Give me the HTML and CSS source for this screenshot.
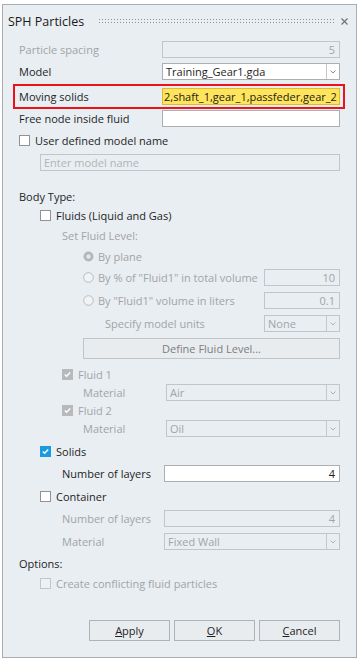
FILE: index.html
```html
<!DOCTYPE html>
<html lang="en">
<head>
  <meta charset="UTF-8" />
  <meta name="viewport" content="width=device-width, initial-scale=1.0"/>
  <title>SPH Particles</title>
  <link rel="stylesheet" href="styles.css">
</head>
<body>
  <div class="dialog">
    <div class="titlebar">
      <span class="title">SPH Particles</span>
      <svg class="grip" width="237" height="6" viewBox="0 0 237 6">
        <defs>
          <pattern id="dots" width="3" height="3" patternUnits="userSpaceOnUse">
            <rect width="1" height="1" fill="#8d9195"/>
          </pattern>
        </defs>
        <rect width="237" height="6" fill="url(#dots)"/>
      </svg>
      <svg class="close" width="7" height="7" viewBox="0 0 7 7">
        <path d="M0.5 0.5 L6.5 6.5 M6.5 0.5 L0.5 6.5" stroke="#6f6f6f" stroke-width="1.1" fill="none"/>
      </svg>
    </div>

    <div class="content">
      <div class="row first">
        <span class="label muted">Particle spacing</span>
        <div class="field off num w-main">5</div>
      </div>

      <div class="row">
        <span class="label">Model</span>
        <div class="field combo w-main">
          <span class="value">Training_Gear1.gda</span>
          <span class="drop"><svg width="6" height="4" viewBox="0 0 6 4"><polyline points="0.5,0.5 3,3 5.5,0.5" fill="none" stroke="#8c8c8c"/></svg></span>
        </div>
      </div>

      <div class="row highlight">
        <span class="label">Moving solids</span>
        <div class="field yellow w-main">
          <span class="value">2,shaft_1,gear_1,passfeder,gear_2</span>
        </div>
      </div>

      <div class="row mt-1">
        <span class="label">Free node inside fluid</span>
        <div class="field w-main"></div>
      </div>

      <div class="row">
        <span class="cb"></span>
        <span class="label">User defined model name</span>
      </div>

      <div class="row">
        <div class="field off w-full placeholder">Enter model name</div>
      </div>

      <div class="row section">
        <span class="label">Body Type:</span>
      </div>

      <div class="row mt-2 ind-1">
        <span class="cb"></span>
        <span class="label">Fluids (Liquid and Gas)</span>
      </div>

      <div class="row mt-3 ind-2">
        <span class="label muted">Set Fluid Level:</span>
      </div>

      <div class="row mt-4 ind-3">
        <svg class="radio" width="11" height="11" viewBox="0 0 11 11">
          <circle cx="5.5" cy="5.5" r="5" fill="#b4b6b8"/>
          <circle cx="5.5" cy="5.5" r="2.2" fill="#e4e6e8"/>
        </svg>
        <span class="label muted">By plane</span>
      </div>

      <div class="row mt-4 ind-3">
        <svg class="radio" width="11" height="11" viewBox="0 0 11 11">
          <circle cx="5.5" cy="5.5" r="4.8" fill="#f1f3f5" stroke="#b9bcbf"/>
        </svg>
        <span class="label muted">By % of "Fluid1" in total volume</span>
        <div class="field off num w-small">10</div>
      </div>

      <div class="row mt-6 ind-3">
        <svg class="radio" width="11" height="11" viewBox="0 0 11 11">
          <circle cx="5.5" cy="5.5" r="4.8" fill="#f1f3f5" stroke="#b9bcbf"/>
        </svg>
        <span class="label muted">By "Fluid1" volume in liters</span>
        <div class="field off num w-small">0.1</div>
      </div>

      <div class="row mt-6 ind-4">
        <span class="label muted">Specify model units</span>
        <div class="field off combo w-small">
          <span class="value">None</span>
          <span class="drop"><svg width="6" height="4" viewBox="0 0 6 4"><polyline points="0.5,0.5 3,3 5.5,0.5" fill="none" stroke="#b0b0b0"/></svg></span>
        </div>
      </div>

      <div class="row btn-row mt-6">
        <div class="button off w-define">Define Fluid Level...</div>
      </div>

      <div class="row mt-7 ind-2">
        <span class="cb checked-off"><svg width="11" height="11" viewBox="0 0 11 11"><polyline points="2.8,5.6 4.6,7.3 8.2,3.6" fill="none" stroke="#fff" stroke-width="1.4"/></svg></span>
        <span class="label muted">Fluid 1</span>
      </div>

      <div class="row mt-1 ind-3">
        <span class="label muted">Material</span>
        <div class="field off combo w-mat">
          <span class="value">Air</span>
          <span class="drop"><svg width="6" height="4" viewBox="0 0 6 4"><polyline points="0.5,0.5 3,3 5.5,0.5" fill="none" stroke="#b0b0b0"/></svg></span>
        </div>
      </div>

      <div class="row mt-1 ind-2">
        <span class="cb checked-off"><svg width="11" height="11" viewBox="0 0 11 11"><polyline points="2.8,5.6 4.6,7.3 8.2,3.6" fill="none" stroke="#fff" stroke-width="1.4"/></svg></span>
        <span class="label muted">Fluid 2</span>
      </div>

      <div class="row mt-1 ind-3">
        <span class="label muted">Material</span>
        <div class="field off combo w-mat">
          <span class="value">Oil</span>
          <span class="drop"><svg width="6" height="4" viewBox="0 0 6 4"><polyline points="0.5,0.5 3,3 5.5,0.5" fill="none" stroke="#b0b0b0"/></svg></span>
        </div>
      </div>

      <div class="row mt-6 ind-1">
        <span class="cb checked"><svg width="11" height="11" viewBox="0 0 11 11"><polyline points="2.8,5.6 4.6,7.3 8.2,3.6" fill="none" stroke="#fff" stroke-width="1.4"/></svg></span>
        <span class="label">Solids</span>
      </div>

      <div class="row ind-2">
        <span class="label">Number of layers</span>
        <div class="field num w-layers">4</div>
      </div>

      <div class="row mt-6 ind-1">
        <span class="cb"></span>
        <span class="label">Container</span>
      </div>

      <div class="row ind-2">
        <span class="label muted">Number of layers</span>
        <div class="field off num w-layers">4</div>
      </div>

      <div class="row mt-6 ind-2">
        <span class="label muted">Material</span>
        <div class="field off combo w-layers">
          <span class="value">Fixed Wall</span>
          <span class="drop"><svg width="6" height="4" viewBox="0 0 6 4"><polyline points="0.5,0.5 3,3 5.5,0.5" fill="none" stroke="#b0b0b0"/></svg></span>
        </div>
      </div>

      <div class="row">
        <span class="label">Options:</span>
      </div>

      <div class="row mt-3 ind-1">
        <span class="cb cb-off"></span>
        <span class="label muted">Create conflicting fluid particles</span>
      </div>

      <div class="footer">
        <div class="button"><u>A</u>pply</div>
        <div class="button"><u>O</u>K</div>
        <div class="button"><u>C</u>ancel</div>
      </div>
    </div>
  </div>
</body>
</html>
```

FILE: styles.css
```css
*, *::before, *::after {
  box-sizing: border-box;
}

body {
  margin: 0;
  background: #fff;
  font-family: "Open Sans", "Noto Sans", sans-serif;
  font-size: 11px;
  color: #1e1e1e;
}

.dialog {
  margin: 4px 0 0 2px;
  width: 355px;
  height: 654px;
  border: 1px solid #a9adb1;
  background: #e9eef2;
  display: flex;
  flex-direction: column;
}

.titlebar {
  height: 33px;
  display: flex;
  align-items: center;
  padding: 0 8px 0 5px;
  flex-shrink: 0;
}

.title {
  font-size: 12.5px;
  color: #1a1a1a;
}

.grip {
  margin-left: auto;
}

.close {
  margin-left: 5px;
}

.content {
  flex: 1;
  display: flex;
  flex-direction: column;
  padding: 0 16px;
}

.row {
  display: flex;
  align-items: center;
  height: 17px;
  margin-top: 5px;
  flex-shrink: 0;
}

.row.first { margin-top: 3px; }
.row.mt-1 { margin-top: 1px; }
.row.mt-2 { margin-top: 2px; }
.row.mt-3 { margin-top: 3px; }
.row.mt-4 { margin-top: 4px; }
.row.mt-6 { margin-top: 6px; }
.row.mt-7 { margin-top: 7px; }
.row.section { margin-top: 17px; }

.ind-1 { padding-left: 21px; }
.ind-2 { padding-left: 43px; }
.ind-3 { padding-left: 64px; }
.ind-4 { padding-left: 86px; }

.label {
  white-space: nowrap;
}

.muted {
  color: #a2a4a6;
}

.highlight {
  height: 25px;
  margin: 4px -5px 0 -6px;
  border: 2px solid #e8131b;
  padding: 0 3px 0 4px;
}

.field {
  margin-left: auto;
  height: 17px;
  border: 1px solid #abaeb2;
  background: #fff;
  display: flex;
  align-items: center;
  padding: 0 3px;
  overflow: hidden;
  white-space: nowrap;
}

.field.off {
  background: #e9eef2;
  border-color: #c2c6ca;
  color: #a2a4a6;
}

.field.num {
  justify-content: flex-end;
  padding-right: 4px;
}

.field.placeholder {
  color: #b2b4b6;
}

.field.yellow {
  background: #ffe55c;
  border-color: #e2b92a;
  padding-left: 1px;
  color: #1a1a1a;
}

.combo {
  padding-right: 0;
}

.drop {
  margin-left: auto;
  width: 13px;
  height: 100%;
  border-left: 1px solid #c6c9cc;
  display: flex;
  align-items: center;
  justify-content: center;
  background: #fff;
}

.field.off .drop {
  background: #e9eef2;
}

.cb {
  width: 11px;
  height: 11px;
  border: 1px solid #8f9397;
  background: #fff;
  margin-right: 5px;
  flex-shrink: 0;
  display: flex;
}

.cb svg {
  margin: -1px;
}

.cb.cb-off {
  border-color: #c3c6c9;
  background: #eef1f4;
}

.cb.checked {
  background: #1a9be0;
  border-color: #1a9be0;
}

.cb.checked-off {
  background: #b7babd;
  border-color: #b7babd;
}

.radio {
  margin-right: 4px;
  flex-shrink: 0;
}

.btn-row {
  height: 21px;
}

.button {
  height: 21px;
  width: 81px;
  border: 1px solid #b0b3b6;
  background: #e8ecef;
  display: flex;
  align-items: center;
  justify-content: center;
  color: #1e1e1e;
}

.button.off {
  margin-left: auto;
  color: #7c7e80;
  border-color: #c2c5c8;
}

.button u {
  text-decoration-thickness: 1px;
  text-underline-offset: 1px;
}

.footer {
  margin-top: 28px;
  display: flex;
  justify-content: flex-end;
  gap: 4px;
}

.w-main { width: 178px; }
.w-small { width: 76px; }
.w-mat { width: 174px; }
.w-layers { width: 176px; }
.w-full { width: 300px; }
.w-define { width: 257px; }
```
